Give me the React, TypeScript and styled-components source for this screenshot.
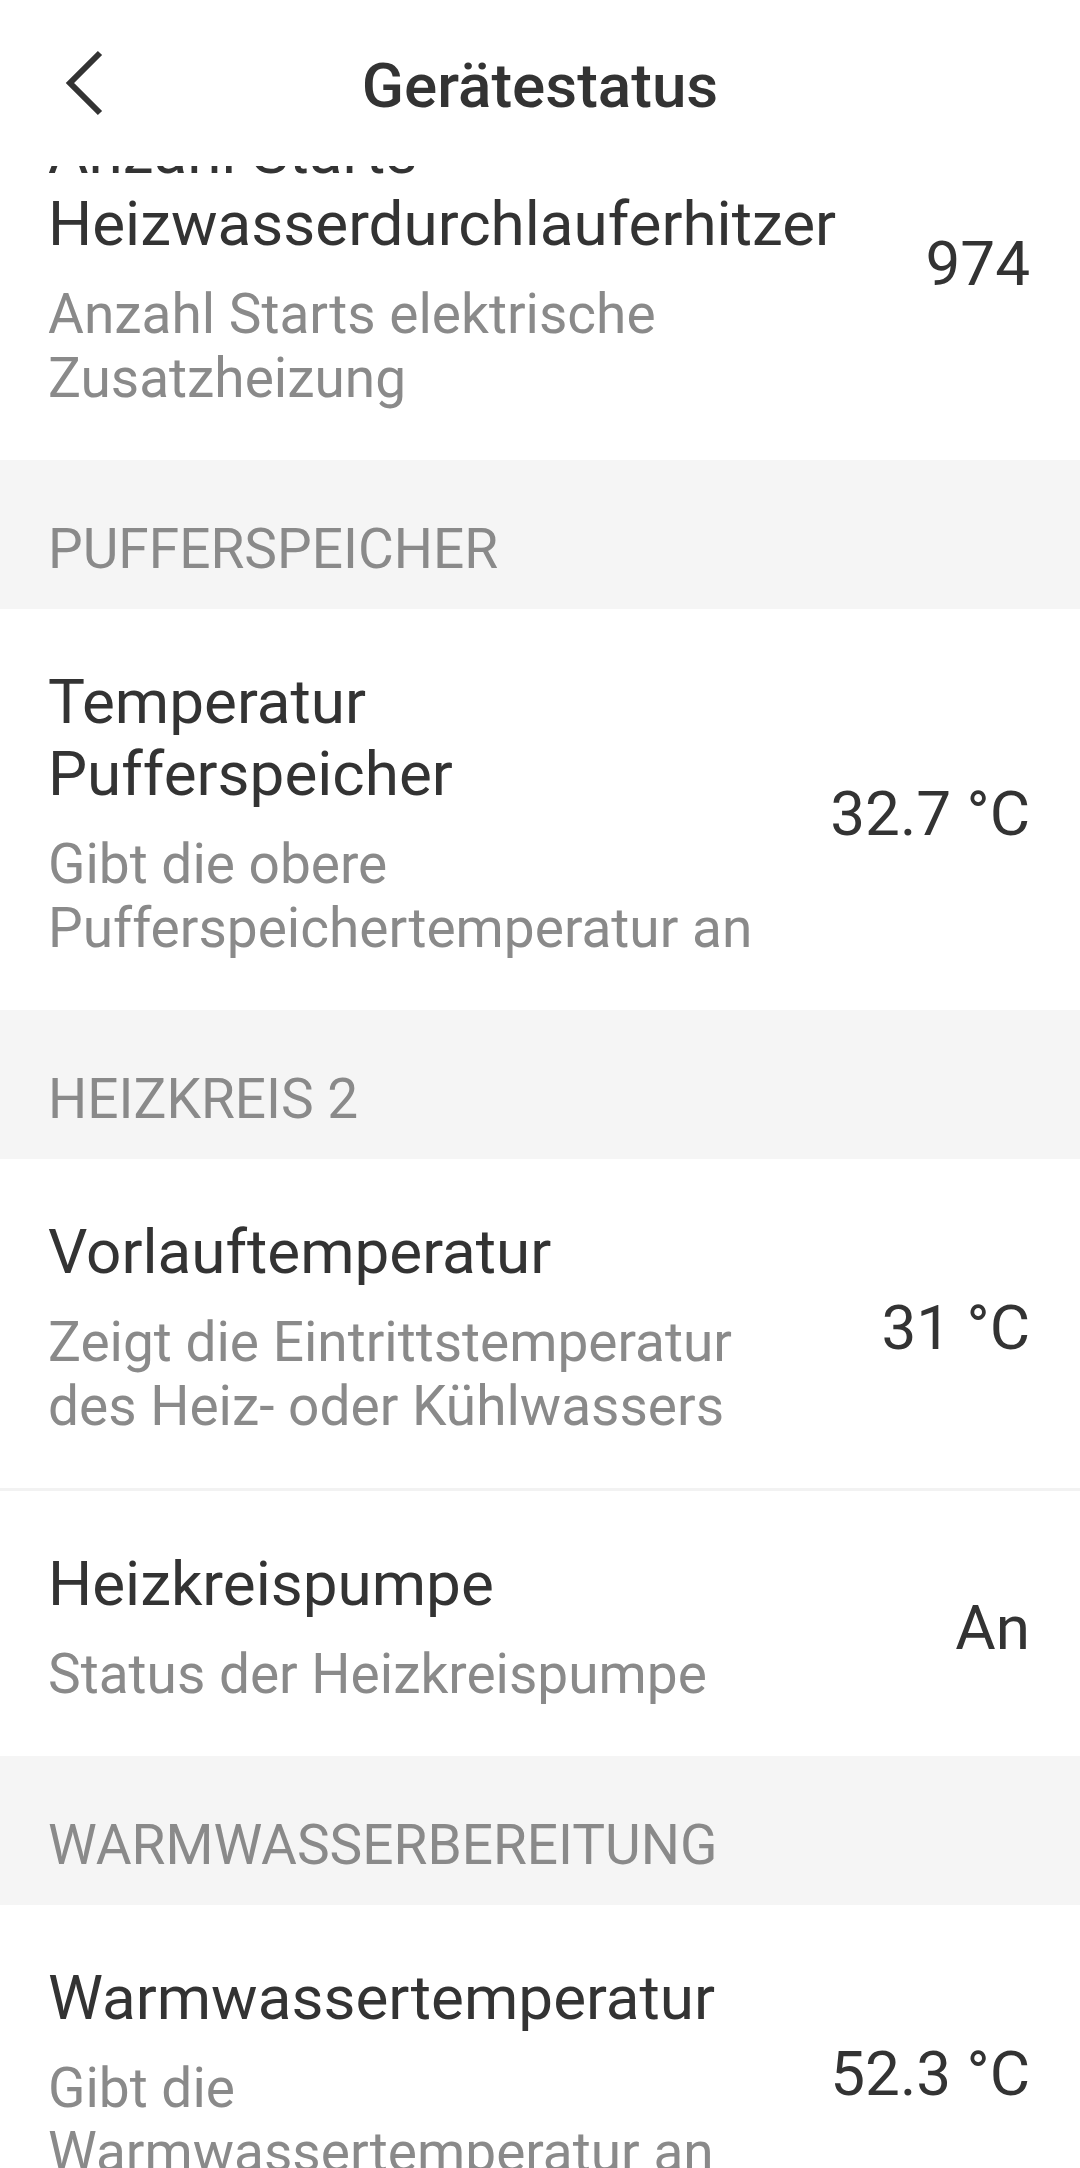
import React, { useLayoutEffect, useRef } from 'react';
import styled, { createGlobalStyle } from 'styled-components';

const GlobalStyle = createGlobalStyle`
  html, body {
    margin: 0;
    padding: 0;
    background: #ffffff;
  }

  body {
    font-family: Roboto, 'Noto Sans', 'Liberation Sans', sans-serif;
    -webkit-font-smoothing: antialiased;
  }
`;

// Layout
const Screen = styled.div`
  width: 1080px;
  height: 2168px;
  display: flex;
  flex-direction: column;
  overflow: hidden;
  background: #ffffff;
`;

const AppBar = styled.header`
  flex: 0 0 166px;
  box-sizing: border-box;
  padding-top: 6px;
  display: grid;
  grid-template-columns: 1fr auto 1fr;
  align-items: center;
  background: #ffffff;
`;

const BackButton = styled.button`
  justify-self: start;
  display: flex;
  align-items: center;
  justify-content: center;
  width: 120px;
  height: 120px;
  margin-left: 24px;
  margin-top: -6px;
  padding: 0;
  border: none;
  background: transparent;
  color: #333333;
  cursor: pointer;
`;

const Title = styled.h1`
  margin: 0;
  font-size: 62px;
  font-weight: 500;
  color: #333333;
  line-height: 72px;
`;

const Scroller = styled.main`
  flex: 1;
  overflow: hidden;
`;

const SectionHeader = styled.div`
  padding: 57px 50px 28px 48px;
  background: #f5f5f5;
  color: #8a8a8a;
  font-size: 55px;
  line-height: 64px;
  text-transform: uppercase;
`;

const Row = styled.div`
  display: flex;
  align-items: center;
  gap: 72px;
  padding: 57px 50px 50px 48px;
  background: #ffffff;

  & + & {
    border-top: 3px solid #f2f2f2;
  }
`;

const RowText = styled.div`
  flex: 1;
  min-width: 0;
`;

const RowTitle = styled.div`
  font-size: 62px;
  line-height: 72px;
  color: #333333;
`;

const RowHint = styled.div`
  margin-top: 22px;
  font-size: 55px;
  line-height: 64px;
  color: #8a8a8a;
`;

const RowValue = styled.div`
  flex: none;
  font-size: 62px;
  color: #333333;
  white-space: nowrap;
`;

interface Item {
  title: string;
  hint: string;
  value: string;
}

interface Section {
  name?: string;
  items: Item[];
}

const sections: Section[] = [
  {
    items: [
      {
        title: 'Anzahl Starts Heizwasserdurchlauferhitzer',
        hint: 'Anzahl Starts elektrische Zusatzheizung',
        value: '974',
      },
    ],
  },
  {
    name: 'Pufferspeicher',
    items: [
      {
        title: 'Temperatur Pufferspeicher',
        hint: 'Gibt die obere Pufferspeichertemperatur an',
        value: '32.7 °C',
      },
    ],
  },
  {
    name: 'Heizkreis 2',
    items: [
      {
        title: 'Vorlauftemperatur',
        hint: 'Zeigt die Eintrittstemperatur des Heiz- oder Kühlwassers',
        value: '31 °C',
      },
      {
        title: 'Heizkreispumpe',
        hint: 'Status der Heizkreispumpe',
        value: 'An',
      },
    ],
  },
  {
    name: 'Warmwasserbereitung',
    items: [
      {
        title: 'Warmwassertemperatur',
        hint: 'Gibt die Warmwassertemperatur an',
        value: '52.3 °C',
      },
    ],
  },
];

const ChevronLeft = () => (
  <svg width="44" height="68" viewBox="0 0 44 68" fill="none">
    <path
      d="M38 4 L8 34 L38 64"
      stroke="currentColor"
      strokeWidth="6"
      strokeLinecap="butt"
      strokeLinejoin="miter"
    />
  </svg>
);

const App: React.FC = () => {
  const listRef = useRef<HTMLElement>(null);

  // the list is shown part-way scrolled
  useLayoutEffect(() => {
    if (listRef.current) listRef.current.scrollTop = 107;
  }, []);

  return (
    <>
      <GlobalStyle />
      <Screen>
        <AppBar>
          <BackButton aria-label="Zurück">
            <ChevronLeft />
          </BackButton>
          <Title>Gerätestatus</Title>
          <span />
        </AppBar>

        <Scroller ref={listRef}>
          {sections.map((section, i) => (
            <React.Fragment key={i}>
              {section.name && <SectionHeader>{section.name}</SectionHeader>}
              {section.items.map((item) => (
                <Row key={item.title}>
                  <RowText>
                    <RowTitle>{item.title}</RowTitle>
                    <RowHint>{item.hint}</RowHint>
                  </RowText>
                  <RowValue>{item.value}</RowValue>
                </Row>
              ))}
            </React.Fragment>
          ))}
        </Scroller>
      </Screen>
    </>
  );
};

export default App;
